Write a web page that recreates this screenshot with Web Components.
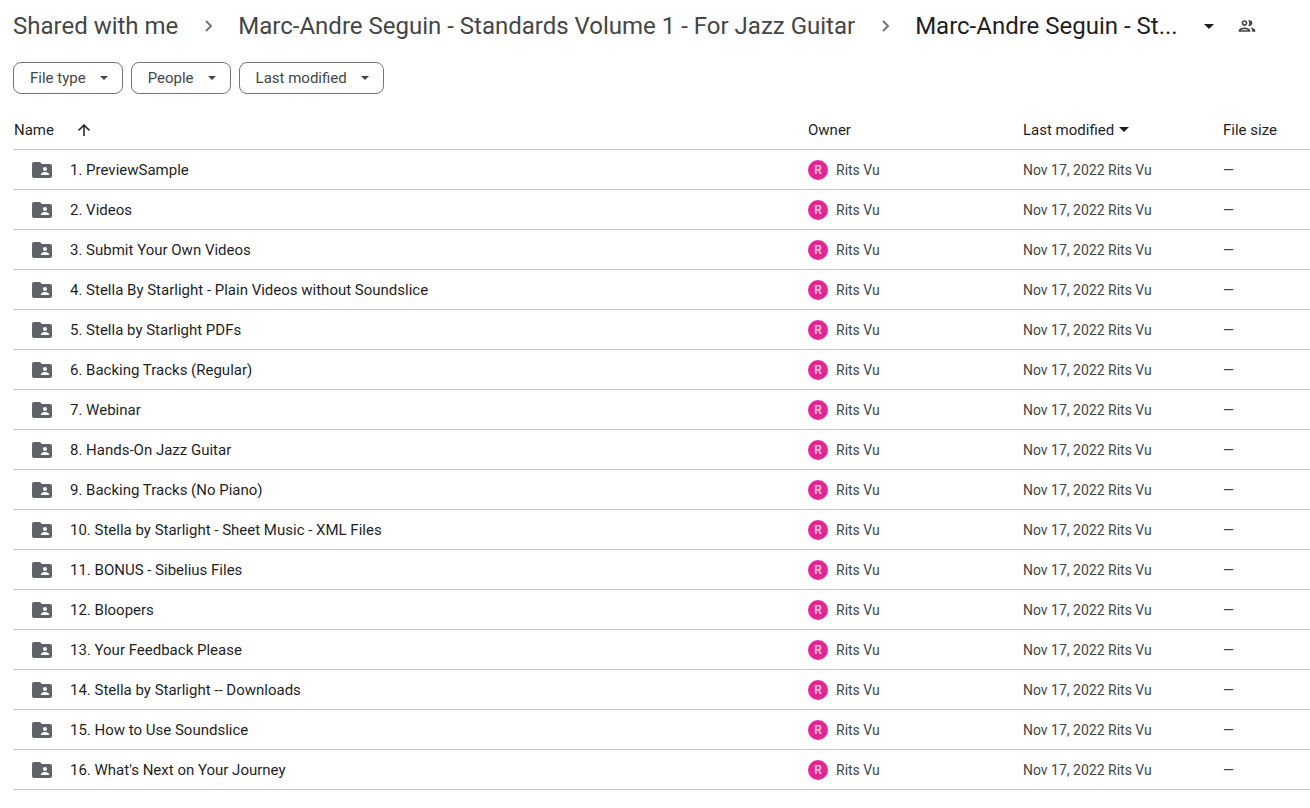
<!DOCTYPE html>
<html lang="en">
<head>
    <meta charset="UTF-8">
    <meta name="viewport" content="width=device-width, initial-scale=1.0">
    <title>Shared with me</title>
    <style>
        body {
            margin: 0;
            background: #fff;
            color: #1f1f1f;
            font-family: Roboto, "Liberation Sans", sans-serif;
            font-size: 15px;
            line-height: 20px;
        }
    </style>
</head>
<body>
    <template id="drive-page">
        <style>
            :host { display: block; padding-left: 13px; }
            ::slotted(filter-bar) { margin: 10px 0 16px; }
        </style>
        <slot></slot>
    </template>

    <template id="path-bar">
        <style>
            :host { display: block; }
            nav { display: flex; align-items: center; height: 52px; white-space: nowrap; }
        </style>
        <nav aria-label="Folder path"><slot></slot></nav>
    </template>

    <template id="path-crumb">
        <style>
            :host { display: flex; align-items: center; color: #444746; font-size: 24px; line-height: 32px; }
            :host([current]) { color: #1f1f1f; }
            a { color: inherit; text-decoration: none; }
            svg { display: block; margin: 0 20px; fill: none; stroke: #747775; stroke-width: 2; }
            :host([current]) svg { display: none; }
        </style>
        <a href="#"><slot></slot></a>
        <svg width="20" height="20" viewBox="0 0 20 20" aria-hidden="true"><path d="M8 5l5 5-5 5"/></svg>
    </template>

    <template id="path-actions">
        <style>
            :host { display: flex; align-items: center; gap: 16px; margin-left: 20px; }
            button { display: block; width: 22px; height: 24px; padding: 0; border: 0; background: none; color: #1f1f1f; }
            button + button { color: #444746; }
            svg { display: block; margin: auto; fill: currentColor; }
        </style>
        <button aria-label="Folder options">
            <svg width="10" height="5" viewBox="0 0 10 5"><path d="M0 0h10L5 5z"/></svg>
        </button>
        <button aria-label="Manage access">
            <svg width="20" height="20" viewBox="0 0 24 24"><path d="M9 13.75c-2.34 0-7 1.17-7 3.5V19h14v-1.75c0-2.33-4.66-3.5-7-3.5zM4.34 17c.84-.58 2.87-1.25 4.66-1.25s3.82.67 4.66 1.25H4.34zM9 12c1.93 0 3.5-1.57 3.5-3.5S10.93 5 9 5 5.5 6.57 5.5 8.5 7.07 12 9 12zm0-5c.83 0 1.5.67 1.5 1.5S9.83 10 9 10s-1.5-.67-1.5-1.5S8.17 7 9 7zm7.04 6.81c1.16.84 1.96 1.96 1.96 3.44V19h4v-1.75c0-2.02-3.5-3.17-5.96-3.44zM15 12c1.93 0 3.5-1.57 3.5-3.5S16.93 5 15 5c-.54 0-1.04.13-1.5.35.63.89 1 1.98 1 3.15s-.37 2.26-1 3.15c.46.22.96.35 1.5.35z"/></svg>
        </button>
    </template>

    <template id="filter-bar">
        <style>
            :host { display: flex; gap: 8px; }
        </style>
        <slot></slot>
    </template>

    <template id="filter-chip">
        <style>
            :host { display: block; }
            button {
                display: flex;
                align-items: center;
                gap: 14px;
                height: 32px;
                padding: 0 14px 0 16px;
                border: 1px solid #747775;
                border-radius: 8px;
                background: #fff;
                color: #444746;
                font: inherit;
            }
            svg { fill: currentColor; }
        </style>
        <button aria-haspopup="true">
            <slot></slot>
            <svg width="8" height="4" viewBox="0 0 8 4" aria-hidden="true"><path d="M0 0h8L4 4z"/></svg>
        </button>
    </template>

    <template id="owner-avatar">
        <style>
            :host {
                display: inline-flex;
                align-items: center;
                justify-content: center;
                width: 20px;
                height: 20px;
                border-radius: 50%;
                background: #e52592;
                color: #f9cfe6;
                font-size: 12px;
                font-weight: 500;
            }
        </style>
        <slot></slot>
    </template>

    <template id="shared-folder-icon">
        <style>
            :host { display: inline-block; }
            svg { display: block; fill: #5f6368; }
        </style>
        <svg width="24" height="24" viewBox="0 0 24 24" aria-hidden="true"><path d="M20 6h-8l-2-2H4c-1.1 0-1.99.9-1.99 2L2 18c0 1.1.9 2 2 2h16c1.1 0 2-.9 2-2V8c0-1.1-.9-2-2-2zm-5 3c1.1 0 2 .9 2 2s-.9 2-2 2-2-.9-2-2 .9-2 2-2zm4 8h-8v-1c0-1.33 2.67-2 4-2s4 .67 4 2v1z"/></svg>
    </template>

    <template id="file-list">
        <style>
            :host { display: block; }
            table { width: 100%; table-layout: fixed; border-collapse: separate; border-spacing: 0; }
            th, td {
                box-sizing: border-box;
                height: 40px;
                padding: 0;
                border-bottom: 1px solid #c7c7c7;
                text-align: left;
                font-weight: 400;
                white-space: nowrap;
            }
            td { color: #444746; font-size: 14px; }
            td.name { font-size: 15px; }
            .owner { width: 215px; }
            .modified { width: 200px; }
            .size { width: 87px; }
            .cell { display: flex; align-items: center; gap: 8px; }
            th .cell { gap: 5px; }
            th.name { padding-left: 1px; }
            th.name .cell { gap: 24px; }
            td.name { padding-left: 17px; }
            td.name .cell { gap: 16px; }
            button { padding: 0; border: 0; background: none; color: inherit; font: inherit; }
            a { color: #1f1f1f; text-decoration: none; }
            svg { display: block; }
        </style>
        <table>
            <thead>
                <tr>
                    <th class="name"><button class="cell">Name
                        <svg width="12" height="12" viewBox="0 0 12 12" fill="none" stroke="#1f1f1f" stroke-width="1.5" aria-hidden="true"><path d="M6 12V1M.5 6.5L6 1l5.5 5.5"/></svg>
                    </button></th>
                    <th class="owner">Owner</th>
                    <th class="modified"><button class="cell">Last modified
                        <svg width="10" height="5" viewBox="0 0 10 5" fill="#1f1f1f" aria-hidden="true"><path d="M0 0h10L5 5z"/></svg>
                    </button></th>
                    <th class="size">File size</th>
                </tr>
            </thead>
            <tbody></tbody>
        </table>
    </template>

    <drive-page>
        <path-bar>
            <path-crumb>Shared with me</path-crumb>
            <path-crumb>Marc-Andre Seguin - Standards Volume 1 - For Jazz Guitar</path-crumb>
            <path-crumb current>Marc-Andre Seguin - St...</path-crumb>
            <path-actions></path-actions>
        </path-bar>
        <filter-bar>
            <filter-chip>File type</filter-chip>
            <filter-chip>People</filter-chip>
            <filter-chip>Last modified</filter-chip>
        </filter-bar>
        <file-list></file-list>
    </drive-page>

    <script>
        // Base class: clones the template that has the element's own tag name
        class TemplateElement extends HTMLElement {
            constructor() {
                super()
                const template = document.getElementById(this.localName)
                this.attachShadow({mode: "open"}).appendChild(template.content.cloneNode(true))
            }
        }

        const folders = [
            "1. PreviewSample",
            "2. Videos",
            "3. Submit Your Own Videos",
            "4. Stella By Starlight - Plain Videos without Soundslice",
            "5. Stella by Starlight PDFs",
            "6. Backing Tracks (Regular)",
            "7. Webinar",
            "8. Hands-On Jazz Guitar",
            "9. Backing Tracks (No Piano)",
            "10. Stella by Starlight - Sheet Music - XML Files",
            "11. BONUS - Sibelius Files",
            "12. Bloopers",
            "13. Your Feedback Please",
            "14. Stella by Starlight -- Downloads",
            "15. How to Use Soundslice",
            "16. What's Next on Your Journey"
        ]

        customElements.define("drive-page", class extends TemplateElement {})
        customElements.define("path-bar", class extends TemplateElement {})
        customElements.define("path-crumb", class extends TemplateElement {})
        customElements.define("path-actions", class extends TemplateElement {})
        customElements.define("filter-bar", class extends TemplateElement {})
        customElements.define("filter-chip", class extends TemplateElement {})
        customElements.define("owner-avatar", class extends TemplateElement {})
        customElements.define("shared-folder-icon", class extends TemplateElement {})
        customElements.define("file-list", class extends TemplateElement {
            connectedCallback() {
                this.shadowRoot.querySelector("tbody").innerHTML = folders.map(name => `
                    <tr>
                        <td class="name"><div class="cell"><shared-folder-icon></shared-folder-icon><a href="#">${name}</a></div></td>
                        <td><div class="cell"><owner-avatar>R</owner-avatar>Rits Vu</div></td>
                        <td>Nov 17, 2022 Rits Vu</td>
                        <td>—</td>
                    </tr>`).join("")
            }
        })
    </script>
</body>
</html>
